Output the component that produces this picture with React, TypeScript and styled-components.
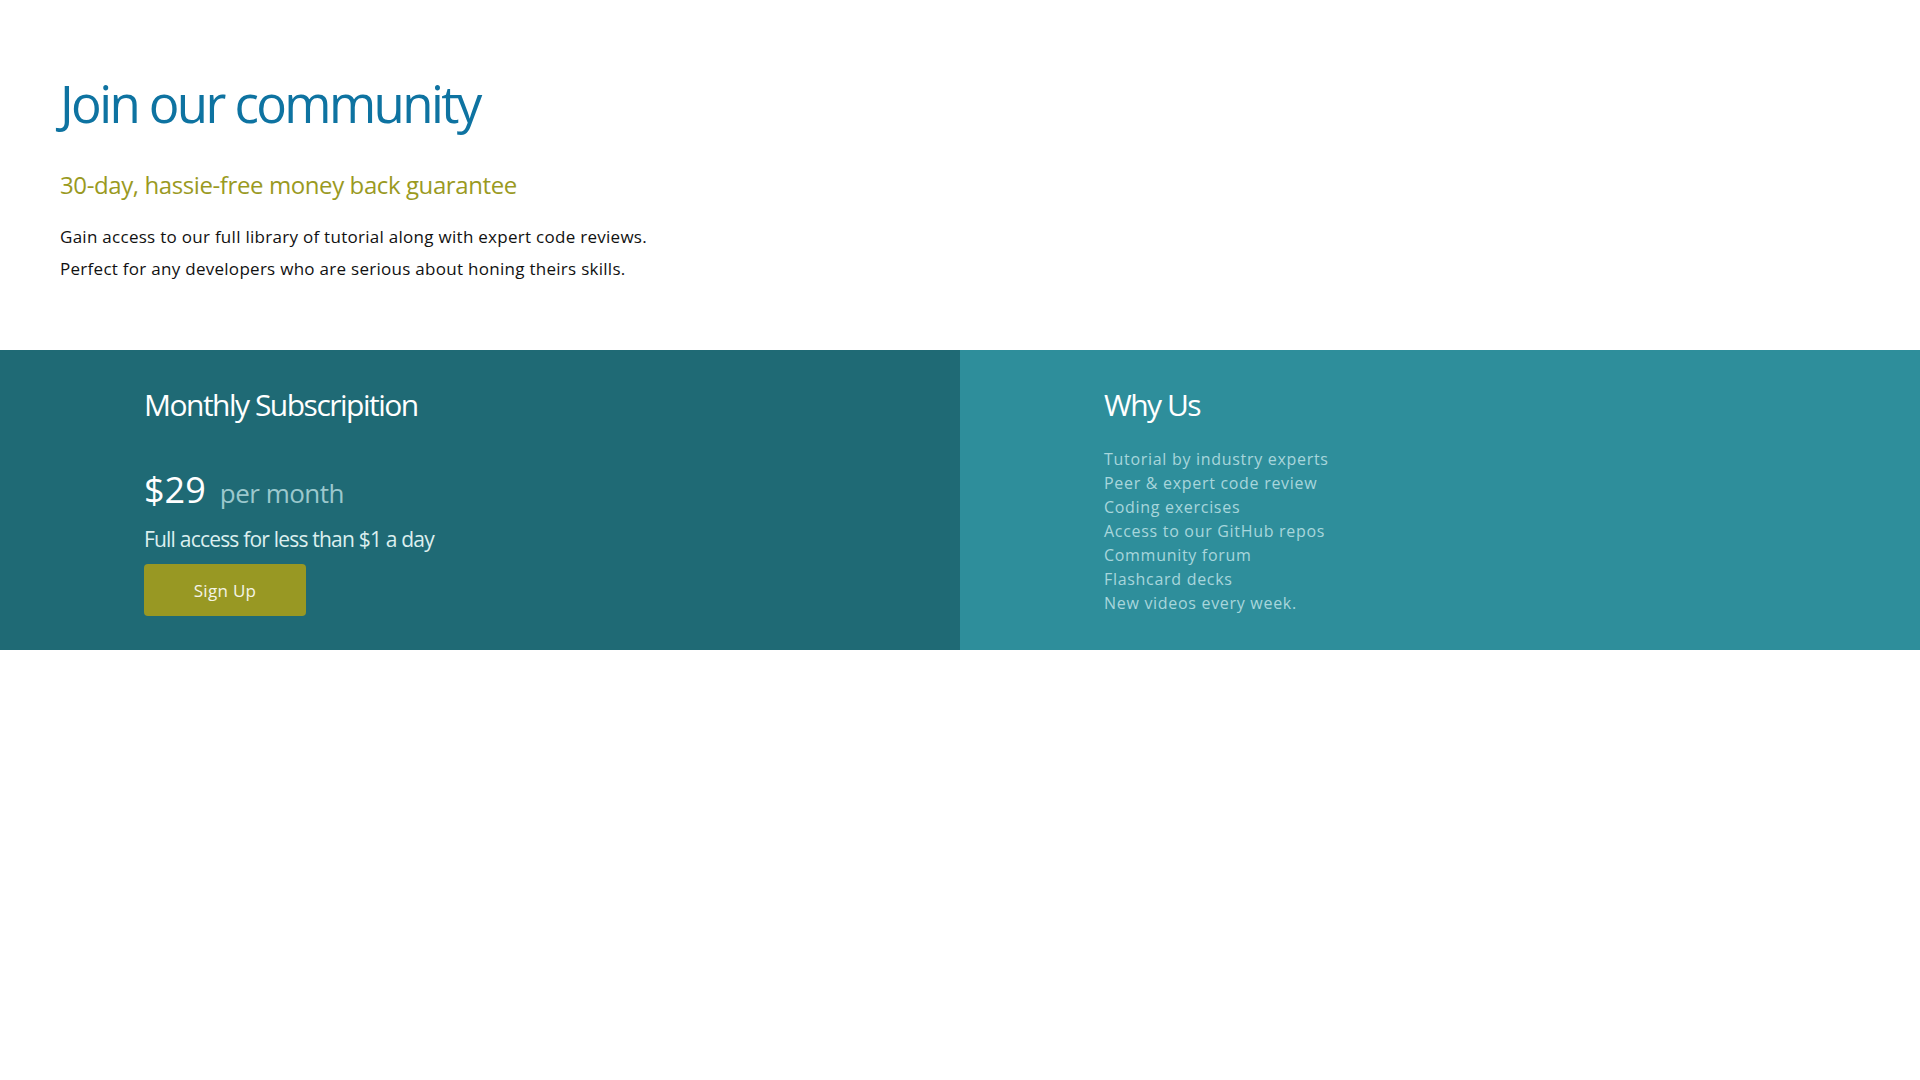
import React from "react";
import styled, { createGlobalStyle } from "styled-components";

const Global = createGlobalStyle`
  html, body { margin: 0; padding: 0; background: #ffffff; }
  body { font-family: "Open Sans", "DejaVu Sans", sans-serif; }
  * { box-sizing: border-box; }
`;

const Page = styled.div`
  width: 1920px;
  display: flex;
  flex-direction: column;
`;

const Intro = styled.header`
  padding: 68px 60px 65px;
  display: flex;
  flex-direction: column;
`;

const Title = styled.h1`
  margin: 0;
  font-size: 51px;
  font-weight: 400;
  line-height: 70px;
  color: #0e73a1;
  letter-spacing: -2.6px;
`;

const Guarantee = styled.h2`
  margin: 31px 0 0;
  font-size: 24px;
  font-weight: 400;
  line-height: 32px;
  color: #9a9a1f;
  letter-spacing: -0.4px;
`;

const Lead = styled.p`
  margin: 20px 0 0;
  font-size: 17px;
  line-height: 32px;
  color: #111;
  letter-spacing: 0.28px;
`;

const Band = styled.section`
  display: grid;
  grid-template-columns: 1fr 1fr;
  height: 300px;
`;

const Panel = styled.div<{ $bg: string }>`
  background: ${(p) => p.$bg};
  padding: 35px 144px 0;
  display: flex;
  flex-direction: column;
  align-items: flex-start;
`;

const PanelTitle = styled.h3`
  margin: 0;
  font-size: 30px;
  font-weight: 400;
  line-height: 40px;
  color: #ffffff;
  letter-spacing: -1.5px;
`;

const PriceRow = styled.div`
  margin-top: 43px;
  display: flex;
  align-items: baseline;
  gap: 14px;
`;

const Price = styled.span`
  font-size: 36px;
  line-height: 44px;
  color: #ffffff;
`;

const Per = styled.span`
  font-size: 26px;
  color: #9cc8cd;
  letter-spacing: -0.5px;
`;

const Note = styled.p`
  margin: 12px 0 0;
  font-size: 21px;
  line-height: 30px;
  color: #dcefef;
  letter-spacing: -0.8px;
`;

const SignUp = styled.button`
  margin-top: 10px;
  width: 162px;
  height: 52px;
  border: none;
  border-radius: 4px;
  background: #989823;
  color: #f4f4e6;
  font-family: inherit;
  font-size: 17px;
  letter-spacing: 0.3px;
  cursor: pointer;
`;

const Features = styled.ul`
  margin: 22px 0 0;
  padding: 0;
  list-style: none;
`;

const Feature = styled.li`
  font-size: 16px;
  line-height: 24px;
  color: #a8d6dc;
  letter-spacing: 0.7px;
`;

const features = [
  "Tutorial by industry experts",
  "Peer & expert code review",
  "Coding exercises",
  "Access to our GitHub repos",
  "Community forum",
  "Flashcard decks",
  "New videos every week.",
];

export default function App() {
  return (
    <Page>
      <Global />
      <Intro>
        <Title>Join our community</Title>
        <Guarantee>30-day, hassie-free money back guarantee</Guarantee>
        <Lead>
          Gain access to our full library of tutorial along with expert code reviews.
          <br />
          Perfect for any developers who are serious about honing theirs skills.
        </Lead>
      </Intro>
      <Band>
        <Panel $bg="#1f6a75">
          <PanelTitle>Monthly Subscripition</PanelTitle>
          <PriceRow>
            <Price>$29</Price>
            <Per>per month</Per>
          </PriceRow>
          <Note>Full access for less than $1 a day</Note>
          <SignUp>Sign Up</SignUp>
        </Panel>
        <Panel $bg="#2e8e9b">
          <PanelTitle>Why Us</PanelTitle>
          <Features>
            {features.map((f) => (
              <Feature key={f}>{f}</Feature>
            ))}
          </Features>
        </Panel>
      </Band>
    </Page>
  );
}
